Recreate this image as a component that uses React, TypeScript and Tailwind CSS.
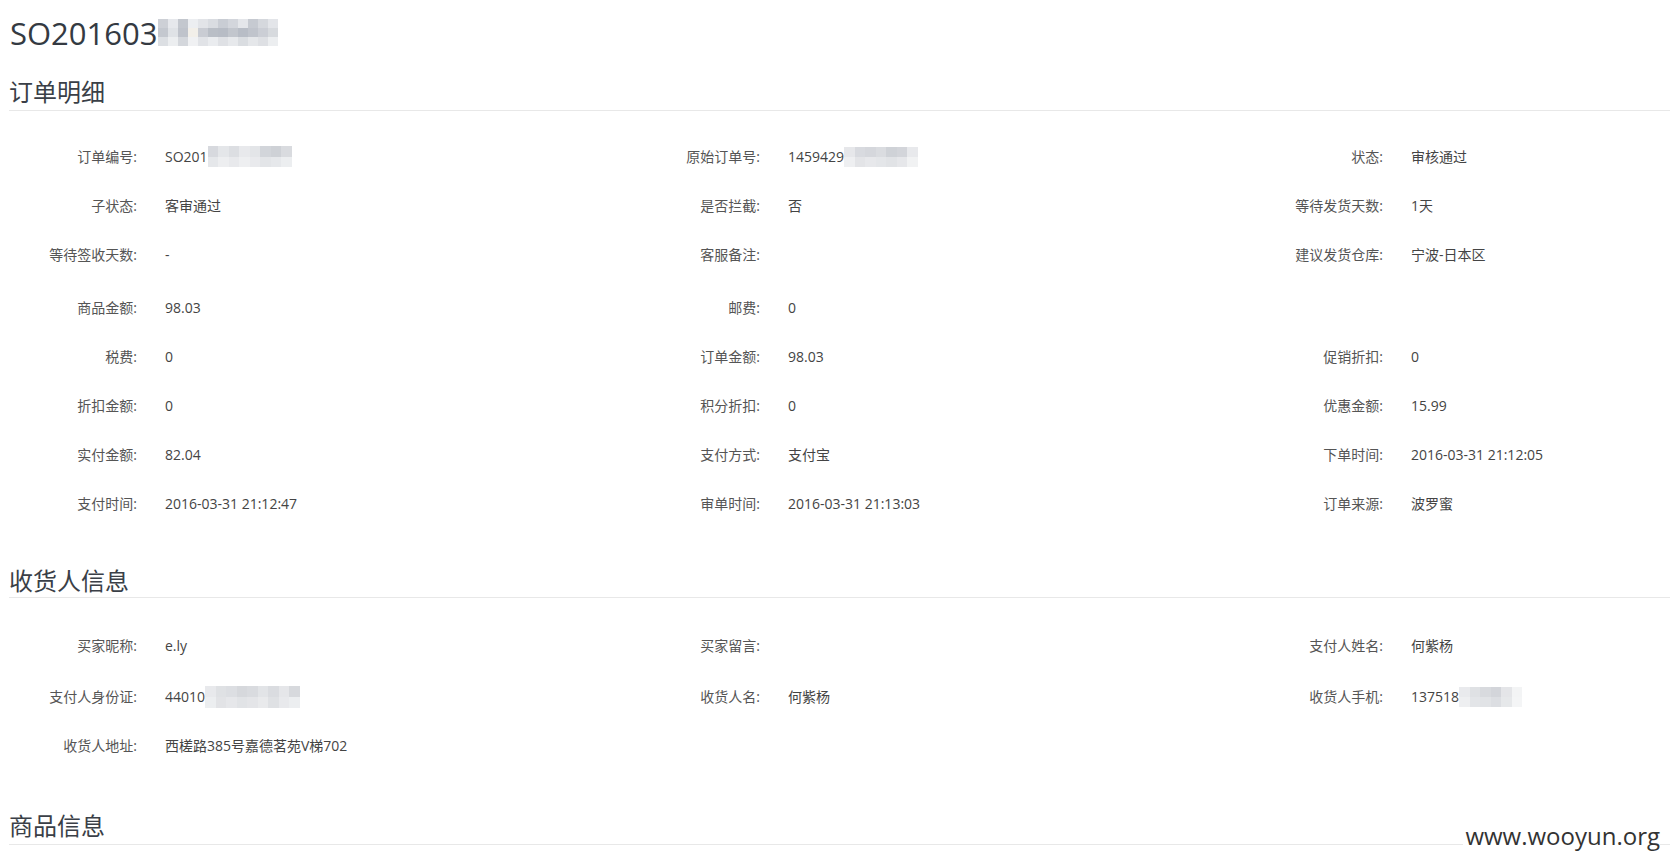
import React from "react";

type Cell = { label: string; value?: React.ReactNode } | null;

const BLUR_TITLE: string[][] = [
    ["bg-[#cdd0d6]", "bg-[#e6e8ec]", "bg-[#c3c7ce]", "bg-[#eceef1]", "bg-[#e2e4e8]", "bg-[#d9dce1]", "bg-[#c9cdd4]", "bg-[#d3d6dc]", "bg-[#e4e6ea]", "bg-[#c6cad1]", "bg-[#d5d8dd]", "bg-[#e3e5e9]"],
    ["bg-[#c4c8cf]", "bg-[#dfe2e6]", "bg-[#bfc3cb]", "bg-[#f2efe9]", "bg-[#c9ccd3]", "bg-[#b9bec6]", "bg-[#b7bcc5]", "bg-[#c2c6cd]", "bg-[#b8bdc6]", "bg-[#c0c4cc]", "bg-[#cbced5]", "bg-[#d7dade]"],
    ["bg-[#dcdfe3]", "bg-[#eceef0]", "bg-[#d4d7dc]", "bg-[#f0f1f3]", "bg-[#e1e3e7]", "bg-[#eaecef]", "bg-[#dfe1e5]", "bg-[#e7e9ec]", "bg-[#dadde1]", "bg-[#e5e7ea]", "bg-[#dee0e4]", "bg-[#eceef0]"],
];

const BLUR_ORDER: string[][] = [
    ["bg-[#d7d9de]", "bg-[#e4e6e9]", "bg-[#dcdee2]", "bg-[#e8e9ec]", "bg-[#e3e5e8]", "bg-[#d2d5da]", "bg-[#ced1d6]", "bg-[#d9dbdf]"],
    ["bg-[#e5e7ea]", "bg-[#edeef0]", "bg-[#e8e9ec]", "bg-[#eeeff1]", "bg-[#e9eaed]", "bg-[#e3e5e8]", "bg-[#e6e8eb]", "bg-[#eceef0]"],
];

const BLUR_ORIGIN: string[][] = [
    ["bg-[#e6e7ea]", "bg-[#d8dadf]", "bg-[#d5d7dc]", "bg-[#dadce0]", "bg-[#cfd2d7]", "bg-[#d3d5da]", "bg-[#e8e9ec]"],
    ["bg-[#eeeff1]", "bg-[#e3e4e7]", "bg-[#e7e8eb]", "bg-[#e4e6e9]", "bg-[#e1e3e6]", "bg-[#e6e7ea]", "bg-[#f1f2f3]"],
];

const BLUR_ID: string[][] = [
    ["bg-[#e8e9ec]", "bg-[#dfe1e4]", "bg-[#dcdee2]", "bg-[#d6d8dc]", "bg-[#d9dbdf]", "bg-[#e2e4e7]", "bg-[#dadce0]", "bg-[#e5e6e9]", "bg-[#d7d9dd]"],
    ["bg-[#eceef0]", "bg-[#e2e3e6]", "bg-[#e6e7ea]", "bg-[#e1e3e6]", "bg-[#e4e5e8]", "bg-[#e9eaec]", "bg-[#dfe1e4]", "bg-[#e8e9ec]", "bg-[#eceef0]"],
];

const BLUR_PHONE: string[][] = [
    ["bg-[#e9eaed]", "bg-[#dfe1e4]", "bg-[#d8dade]", "bg-[#d3d5da]", "bg-[#e4e5e8]", "bg-[#f3f4f5]"],
    ["bg-[#eeeff1]", "bg-[#e3e5e8]", "bg-[#e1e3e6]", "bg-[#dcdee2]", "bg-[#e6e8ea]", "bg-[#f4f5f6]"],
];

const Blur = ({ rows, cell, h }: { rows: string[][]; cell: string; h: string }) => (
    <span className={`inline-flex flex-col ${h} overflow-hidden`}>
        {rows.map((r, i) => (
            <span key={i} className="flex flex-1">
                {r.map((c, j) => (
                    <span key={j} className={`${cell} ${c}`} />
                ))}
            </span>
        ))}
    </span>
);

const Masked = ({ text, rows, h }: { text: string; rows: string[][]; h: string }) => (
    <span className="flex items-center">
        <span>{text}</span>
        <Blur rows={rows} cell="w-[10.5px]" h={h} />
    </span>
);

const orderRows: Cell[][] = [
    [
        { label: "订单编号:", value: <Masked text="SO201" rows={BLUR_ORDER} h="h-[21px]" /> },
        { label: "原始订单号:", value: <Masked text="1459429" rows={BLUR_ORIGIN} h="h-[20px]" /> },
        { label: "状态:", value: "审核通过" },
    ],
    [
        { label: "子状态:", value: "客审通过" },
        { label: "是否拦截:", value: "否" },
        { label: "等待发货天数:", value: "1天" },
    ],
    [
        { label: "等待签收天数:", value: "-" },
        { label: "客服备注:", value: "" },
        { label: "建议发货仓库:", value: "宁波-日本区" },
    ],
    [
        { label: "商品金额:", value: "98.03" },
        { label: "邮费:", value: "0" },
        null,
    ],
    [
        { label: "税费:", value: "0" },
        { label: "订单金额:", value: "98.03" },
        { label: "促销折扣:", value: "0" },
    ],
    [
        { label: "折扣金额:", value: "0" },
        { label: "积分折扣:", value: "0" },
        { label: "优惠金额:", value: "15.99" },
    ],
    [
        { label: "实付金额:", value: "82.04" },
        { label: "支付方式:", value: "支付宝" },
        { label: "下单时间:", value: "2016-03-31 21:12:05" },
    ],
    [
        { label: "支付时间:", value: "2016-03-31 21:12:47" },
        { label: "审单时间:", value: "2016-03-31 21:13:03" },
        { label: "订单来源:", value: "波罗蜜" },
    ],
];

const buyerRows: Cell[][] = [
    [
        { label: "买家昵称:", value: "e.ly" },
        { label: "买家留言:", value: "" },
        { label: "支付人姓名:", value: "何紫杨" },
    ],
    [
        { label: "支付人身份证:", value: <Masked text="44010" rows={BLUR_ID} h="h-[22px]" /> },
        { label: "收货人名:", value: "何紫杨" },
        { label: "收货人手机:", value: <Masked text="137518" rows={BLUR_PHONE} h="h-[20px]" /> },
    ],
    [
        { label: "收货人地址:", value: "西槎路385号嘉德茗苑V梯702" },
        null,
        null,
    ],
];

const InfoRow = ({ cells, className }: { cells: Cell[]; className: string }) => (
    <div className={`flex items-center ${className}`}>
        {cells.map((c, i) => (
            <div key={i} className={i < 2 ? "flex items-center w-[623px]" : "flex items-center flex-1"}>
                {c && (
                    <>
                        <div className="w-[137px] text-right text-[#555]">{c.label}</div>
                        <div className="pl-[28px] text-[#444]">{c.value}</div>
                    </>
                )}
            </div>
        ))}
    </div>
);

const SectionTitle = ({ title, className }: { title: string; className: string }) => (
    <div className={`ml-[9px] border-b border-[#e8e8e8] text-[24px] leading-[24px] text-[#3a3f47] ${className}`}>
        {title}
    </div>
);

export default function App() {
    return (
        <div className="relative w-[1670px] h-[866px] overflow-hidden bg-white font-['Open_Sans','Noto_Sans_CJK_SC',sans-serif] text-[14px]">
            <div className="flex items-center h-[66px] pl-[10px] text-[31px] text-[#343a42]">
                <span>SO201603</span>
                <Blur rows={BLUR_TITLE} cell="w-[10px]" h="h-[28px] ml-[1px] mt-[-1px]" />
            </div>

            <SectionTitle title="订单明细" className="pt-[14px] pb-[6px]" />
            <div className="pt-[21px]">
                {orderRows.map((r, i) => (
                    <InfoRow key={i} cells={r} className={i === 3 ? "h-[49px] mt-[4px]" : "h-[49px]"} />
                ))}
            </div>

            <SectionTitle title="收货人信息" className="mt-[41px] pb-[4px]" />
            <div className="pt-[21px]">
                {buyerRows.map((r, i) => (
                    <InfoRow key={i} cells={r} className={i === 0 ? "h-[53px]" : "h-[49px]"} />
                ))}
            </div>

            <SectionTitle title="商品信息" className="mt-[44px] pb-[6px]" />

            <div className="absolute right-[10px] top-[821px] bg-white pl-[2px] text-[24px] leading-[30px] text-[#333] font-['Open_Sans',sans-serif]">
                www.wooyun.org
            </div>
        </div>
    );
}
